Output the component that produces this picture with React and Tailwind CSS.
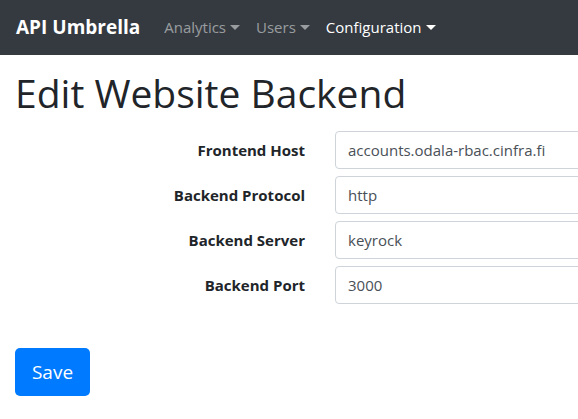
import React from "react";

const font = { fontFamily: '"Open Sans", "Noto Sans", sans-serif' };

function Caret() {
  return (
    <span className="ml-[4px] inline-block h-0 w-0 border-x-[5px] border-t-[5px] border-x-transparent border-t-current align-[3px]" />
  );
}

function Field({ label, value }) {
  return (
    <div className="flex items-center">
      <label className="w-[290px] shrink-0 text-right text-[15px] font-bold text-[#212529]">
        {label}
      </label>
      <div className="ml-[30px] h-[38px] w-[400px] shrink-0 rounded-[4px] border border-[#ced4da] bg-white px-[12px] text-[15px] leading-[36px] text-[#495057]">
        {value}
      </div>
    </div>
  );
}

export default function App() {
  return (
    <div className="min-h-[419px] w-full overflow-hidden bg-white" style={font}>
      <nav className="flex h-[55px] items-center bg-[#343a40] px-[16px]">
        <span className="text-[19px] font-bold text-white">API Umbrella</span>
        <div className="ml-[24px] flex items-center gap-[16px] text-[15px]">
          <span className="text-white/50">
            Analytics
            <Caret />
          </span>
          <span className="text-white/50">
            Users
            <Caret />
          </span>
          <span className="text-white">
            Configuration
            <Caret />
          </span>
        </div>
      </nav>
      <div className="px-[15px]">
        <h1 className="mt-[14px] text-[39px] font-medium leading-[48px] text-[#212529]">
          Edit Website Backend
        </h1>
        <div className="mt-[14px] flex flex-col gap-[7px]">
          <Field label="Frontend Host" value="accounts.odala-rbac.cinfra.fi" />
          <Field label="Backend Protocol" value="http" />
          <Field label="Backend Server" value="keyrock" />
          <Field label="Backend Port" value="3000" />
        </div>
        <button className="mt-[44px] h-[48px] w-[75px] rounded-[5px] bg-[#007bff] text-[19px] text-white">
          Save
        </button>
      </div>
    </div>
  );
}
